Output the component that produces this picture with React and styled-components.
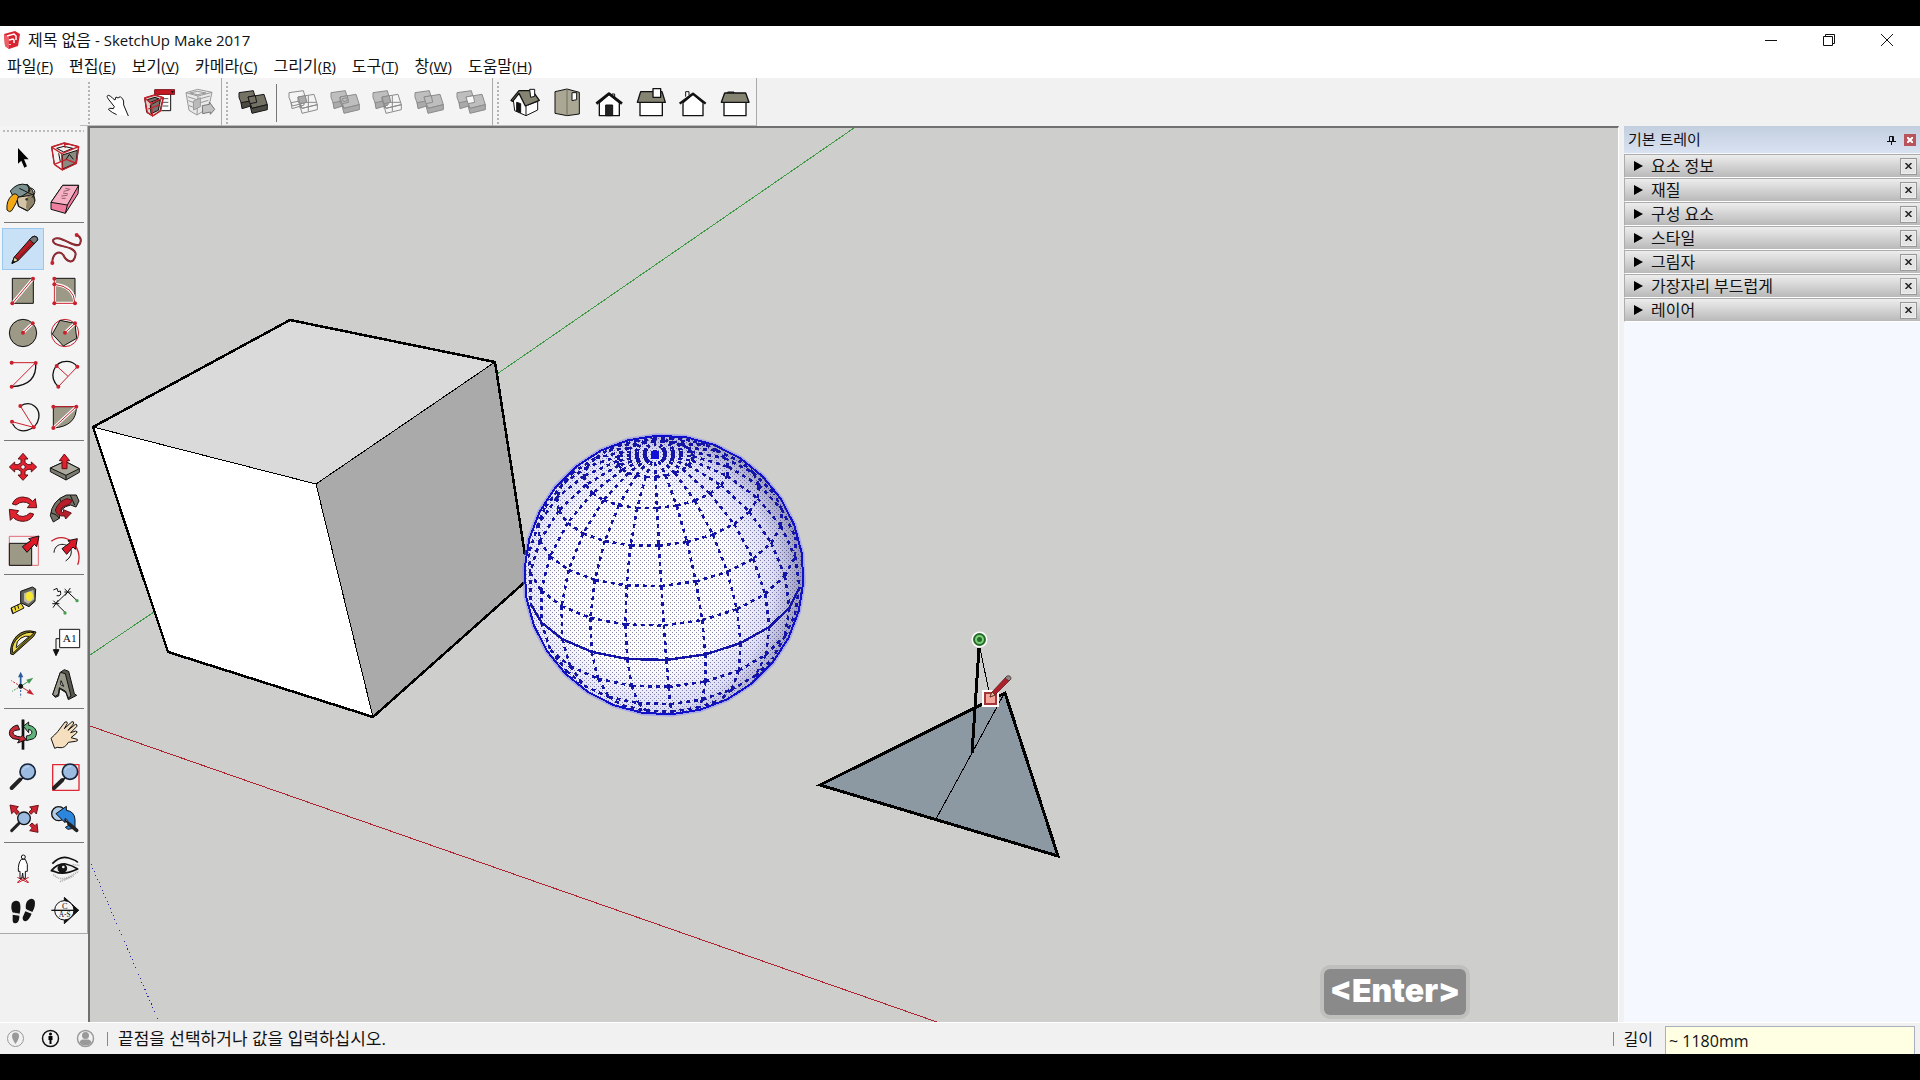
import React from 'react';
import styled, { createGlobalStyle } from 'styled-components';

const GlobalStyle = createGlobalStyle`
  * { box-sizing: border-box; }
  body { margin: 0; background: #000; }
  button, input { font: inherit; color: inherit; }
`;

const RED = '#c8202c';
const TAUPE = '#9c9a86';

const Screen = styled.div`
  display: flex;
  flex-direction: column;
  height: 100vh;
  padding: 26px 0;
  background: #000;
  color: #111;
  font-family: 'Open Sans', 'Noto Sans CJK KR', sans-serif;
  font-size: 16px;
  overflow: hidden;
`;

const Window = styled.div`
  flex: 1;
  min-height: 0;
  display: flex;
  flex-direction: column;
  background: #f1f1f1;
`;

const TitleBar = styled.header`
  display: flex;
  align-items: center;
  height: 28px;
  padding: 0 4px;
  background: #fff;
`;

const Title = styled.h1`
  flex: 1;
  margin: 0 0 0 8px;
  font-size: 15px;
  line-height: 20px;
  font-weight: 400;
`;

const Hangul = styled.span`
  font-size: 16px;
`;

const WindowButton = styled.button`
  display: flex;
  align-items: center;
  justify-content: center;
  width: 58px;
  height: 28px;
  padding: 0;
  border: 0;
  background: transparent;
`;

const MenuBar = styled.nav`
  display: flex;
  gap: 16px;
  height: 24px;
  padding: 0 7px;
  background: #fff;
`;

const MenuItem = styled.button`
  padding: 0;
  border: 0;
  background: transparent;
  font-size: 15px;
  line-height: 24px;
  white-space: nowrap;
`;

const ToolbarDock = styled.div`
  display: flex;
  height: 48px;
  padding-left: 80px;
`;

const Toolbar = styled.div`
  display: flex;
  align-items: center;
  padding: 2px 0 0 ${(p) => p.$indent || 4}px;
  border-right: 1px solid #aaa;
  border-bottom: 1px solid #bbb;
  background: #f4f4f4;
`;

const Grip = styled.span`
  width: 2px;
  height: 42px;
  margin-right: ${(p) => p.$gap}px;
  background: repeating-linear-gradient(#b4b4b4 0 2px, transparent 2px 4px);
`;

const Divider = styled.span`
  width: 1px;
  height: 38px;
  margin: 0 5px 0 2px;
  background: #777;
`;

const ToolButton = styled.button`
  display: flex;
  align-items: center;
  justify-content: center;
  width: 42px;
  height: 42px;
  padding: 0;
  border: 1px solid ${(p) => (p.$active ? '#98c8ee' : 'transparent')};
  background: ${(p) => (p.$active ? '#c9e1f6' : 'transparent')};
`;

const Workspace = styled.div`
  flex: 1;
  min-height: 0;
  display: flex;
`;

const Palette = styled.aside`
  align-self: flex-start;
  width: 88px;
  padding: 4px 0 1px 2px;
  background: #f4f4f4;
  border-right: 1px solid #aaa;
  border-bottom: 1px solid #aaa;
`;

const PaletteGrip = styled.div`
  height: 2px;
  margin: 0 3px 4px 1px;
  background: repeating-linear-gradient(90deg, #bbb 0 2px, transparent 2px 4px);
`;

const PaletteGroup = styled.div`
  display: grid;
  grid-template-columns: 42px 42px;
`;

const PaletteRule = styled.hr`
  height: 1px;
  margin: 2px 3px 5px 2px;
  border: 0;
  background: #777;
`;

const Viewport = styled.main`
  position: relative;
  flex: 1;
  min-width: 0;
  border: solid;
  border-width: 2px 1px 0 2px;
  border-color: #707070 #fff #fff #707070;
  background: #cececc;
  overflow: hidden;
`;

const Scene = styled.svg`
  display: block;
  width: 100%;
  height: 100%;
`;

const KeyBadge = styled.kbd`
  position: absolute;
  right: 152px;
  bottom: 7px;
  width: 142px;
  height: 46px;
  border-radius: 6px;
  background: #8a8a8a;
  box-shadow: 0 0 0 4px rgba(170, 170, 170, 0.4);
  color: #fff;
  font-family: Inter, sans-serif;
  font-size: 32px;
  font-weight: 900;
  line-height: 44px;
  text-align: center;
`;

const Tray = styled.aside`
  width: 301px;
  padding-left: 5px;
  display: flex;
  flex-direction: column;
`;

const TrayHeader = styled.div`
  display: flex;
  align-items: center;
  height: 27px;
  padding: 0 4px 0 4px;
  background: linear-gradient(#c3cedf, #d8e2f1);
`;

const TrayTitle = styled.h2`
  flex: 1;
  margin: 0;
  padding-bottom: 2px;
  font-size: 15px;
  line-height: 24px;
  font-weight: 400;
`;

const PinButton = styled.button`
  display: flex;
  padding: 0;
  margin-right: 8px;
  border: 0;
  background: transparent;
`;

const TrayClose = styled.button`
  display: flex;
  align-items: center;
  justify-content: center;
  width: 12px;
  height: 12px;
  padding: 0;
  border: 0;
  background: #b9545c;
`;

const TrayBody = styled.div`
  flex: 1;
  padding-top: 1px;
  background: #f5f8ff;
`;

const Section = styled.section`
  display: flex;
  align-items: center;
  height: 24px;
  padding-right: 3px;
  border: solid #acacac;
  border-width: 1px 0 0 1px;
  border-bottom: 1px solid #fff;
  background: linear-gradient(#ededed, #b9b9b9);
`;

const SectionToggle = styled.button`
  flex: 1;
  display: flex;
  align-items: center;
  gap: 8px;
  padding: 0 0 0 9px;
  border: 0;
  background: transparent;
  font-size: 16px;
  line-height: 22px;
  text-align: left;
`;

const SectionClose = styled.button`
  display: flex;
  align-items: center;
  justify-content: center;
  width: 17px;
  height: 17px;
  padding: 0;
  border: 1px solid #999;
  outline: 1px solid #eee;
  outline-offset: -2px;
  background: #e4e4e4;
`;

const StatusBar = styled.footer`
  display: flex;
  align-items: center;
  height: 32px;
  padding: 0 5px 0 6px;
  border-top: 1px solid #fff;
`;

const StatusIcons = styled.div`
  display: flex;
  gap: 16px;
  margin-right: 12px;
`;

const StatusIcon = styled.button`
  display: flex;
  width: 19px;
  height: 19px;
  padding: 0;
  border: 0;
  background: transparent;
`;

const StatusRule = styled.span`
  width: 1px;
  height: 14px;
  margin-right: 10px;
  background: #888;
`;

const Hint = styled.p`
  flex: 1;
  margin: 0;
  font-size: 17px;
  line-height: 24px;
`;

const MeasureLabel = styled.label`
  margin-right: 12px;
  line-height: 24px;
`;

const MeasureInput = styled.input`
  align-self: flex-end;
  width: 250px;
  height: 28px;
  padding: 0 3px;
  border: 1px solid #a9b0bd;
  border-bottom: 0;
  background: #ffffe4;
  font-size: 16px;
`;

/* Tool icons are drawn at three units to the pixel around their own centre on a shared sheet. */
function Icon({ x, y, children }) {
  return (
    <svg width="34" height="34" viewBox={`${x - 51} ${y - 51} 102 102`} fill="none" stroke="#111" strokeWidth="3" strokeLinejoin="round" aria-hidden="true">
      {children}
    </svg>
  );
}

const dots = (...pts) => pts.map(([cx, cy], i) => <circle key={i} cx={cx} cy={cy} r="6" fill={RED} stroke="none" />);

const sheet = {
  select: [69, 111, <path d="M54 84V131L64 122L73 143L81 139L72 118H86Z" fill="#000" stroke="none" />],
  component: [195, 111, <>
    <path d="M155 81L193 69L236 80L229 130L187 150L163 133Z" fill="#f4f0ee" />
    <path d="M187 105L232 91L228 129L188 147Z" fill="#8b8a80" />
    <path d="M170 85L192 79L218 85L191 96ZM176 100L181 125M197 120L208 103L220 118" />
    <path d="M155 81L193 69L236 80L185 101ZM163 133L187 150L229 130L236 80M155 81L163 133M185 101L187 150M193 69L196 84M163 133L199 118L229 130" stroke={RED} strokeWidth="4" />
  </>],
  paint: [69, 237, <>
    <path d="M46 207L82 193L98 212L105 240Q104 258 82 273L55 259Z" fill="#857c65" />
    <path d="M31 213Q53 185 82 195L90 213Q67 232 42 235Z" fill="#7b9290" />
    <path d="M50 232L99 225L103 248L83 272L56 259Z" fill="#d2c4a4" />
    <path d="M82 229L99 225L103 248L83 272L78 262Z" fill="#8f8468" stroke="none" />
    <path d="M58 205L99 225M85 214Q87 199 99 207T96 233" />
    <circle cx="80" cy="238" r="4" fill="#333" stroke="none" />
    <path d="M21 270Q18 242 36 226Q47 216 55 229Q52 246 35 272Q29 279 21 270Z" fill="#f3a914" />
  </>],
  eraser: [195, 237, <>
    <path d="M188 196L236 196L234 221L196 280L153 268L153 247Z" fill="#ee7f9f" />
    <path d="M188 196L236 196L202 255L153 247Z" fill="#f8b0c4" /><path d="M202 255L196 280" />
    <path d="M196 205L211 208M191 214L207 210M189 219L204 222M184 228L202 226M185 235L197 235" stroke="#5c3540" strokeWidth="2" />
  </>],
  pencil: [69, 387, <>
    <path d="M36 430L43 411L95 352Q105 345 111 352Q116 359 109 365L55 421Z" fill="#b51f28" />
    <path d="M53 417L102 364" stroke="#7d1018" strokeWidth="3" />
    <path d="M95 352Q105 345 111 352Q116 359 109 365L102 371L89 359Z" fill="#777" />
    <path d="M36 430L43 411L55 421Z" fill="#e0cf9c" /><path d="M36 430L39 422L44 426Z" fill="#111" />
  </>],
  freehand: [195, 387, <>
    <path d="M230 345Q248 354 240 371C228 392 178 339 160 359C151 383 224 373 227 402C222 440 197 421 190 405C178 390 157 400 157 428" stroke="#761821" strokeWidth="6" />
    <path d="M230 345Q248 354 240 371C228 392 178 339 160 359C151 383 224 373 227 402C222 440 197 421 190 405C178 390 157 400 157 428" stroke="#b8424c" strokeWidth="2" />{dots([230, 345], [157, 429])}
  </>],
  rectangle: [69, 513, <>
    <path d="M37 475H100V550H37Z" fill={TAUPE} /><path d="M37 550L99 476" stroke="#fff" strokeWidth="9" />
    <path d="M37 550L99 476" stroke={RED} />{dots([37, 550], [99, 476])}
  </>],
  rotatedRect: [195, 513, <>
    <path d="M163 475H225V550H163Z" fill={TAUPE} /><path d="M163 476V550H225Q222 499 163 493" stroke="#fff" strokeWidth="9" />
    <path d="M163 476V550H225Q222 499 163 493" stroke={RED} />{dots([163, 476], [163, 493], [163, 550], [225, 550])}
  </>],
  circle: [69, 639, <>
    <circle cx="69" cy="639" r="41" fill={TAUPE} /><path d="M69 638L98 610" stroke="#fff" strokeWidth="9" />
    <path d="M69 638L98 610" stroke={RED} />{dots([69, 638], [98, 610])}
  </>],
  polygon: [195, 639, <>
    <circle cx="195" cy="639" r="41" stroke={RED} /><path d="M157 642L180 601L225 610L230 655L190 678Z" fill={TAUPE} />
    <path d="M195 638L225 610" stroke="#fff" strokeWidth="9" /><path d="M195 638L225 610" stroke={RED} />{dots([195, 638], [225, 610])}
  </>],
  arc: [69, 765, <><path d="M107 729Q112 795 36 800" strokeWidth="4" /><path d="M35 728H107L35 800" stroke={RED} />{dots([35, 728], [107, 729], [35, 800])}</>],
  arc2: [195, 765, <><path d="M175 800C144 771 161 724 200 724Q220 724 232 740" strokeWidth="4" /><path d="M170 738L204 769M175 800L232 740" stroke={RED} />{dots([170, 738], [175, 800], [232, 740])}</>],
  arc3: [69, 891, <><path d="M61 858C97 838 121 867 116 895C109 934 56 947 38 912" strokeWidth="4" /><path d="M61 858L101 922L36 905" stroke={RED} />{dots([61, 858], [101, 922], [36, 905])}</>],
  pie: [195, 891, <>
    <path d="M160 860H229Q230 919 160 924Z" fill={TAUPE} /><path d="M229 860L160 924" stroke="#fff" strokeWidth="9" />
    <path d="M160 860H229L160 924" stroke={RED} />{dots([160, 860], [229, 860], [160, 924])}
  </>],
  move: [69, 111, <path d="M69 70L84 87H75V98L84 104H94V96L110 111L94 126V118H84L75 124V135H84L69 151L54 135H63V124L54 118H44V126L28 111L44 96V104H54L63 98V87H54ZM69 103L61 111L69 119L77 111Z" fill="#e3202d" fillRule="evenodd" stroke="#5c1017" />],
  pushpull: [195, 111, <>
    <path d="M151 114L195 94L238 116V127L198 150L151 125Z" fill="#7d7c70" /><path d="M151 114L195 94L238 116L198 136Z" fill="#aaa99b" /><path d="M198 136V150" />
    <path d="M193 72L209 92H201V116H186V92H178Z" fill="#e3202d" stroke="#5c1017" />
  </>],
  rotate: [69, 237, <g fill="#df2430" stroke="#5c1017">
    <path d="M37 222Q45 201 69 201Q89 202 98 214L106 206L110 233L82 233L90 223Q69 208 48 225Z" />
    <path d="M101 252Q94 273 69 274Q48 273 40 262L31 271L28 238L56 242L49 251Q68 269 90 249Z" />
  </g>],
  followme: [195, 237, <>
    <path d="M151 257Q156 211 199 195H229L237 213L228 231L212 225Q178 231 178 265L160 276Z" fill="#747367" />
    <path d="M153 248L169 255L178 265M179 207L190 226M211 196L224 225" />
    <path d="M166 240Q176 213 201 206L218 211L207 224Q185 229 183 239Q182 249 191 248L190 239L214 249L197 267L194 258Q170 260 166 240Z" fill="#b71e2a" stroke="#5c1017" />
  </>],
  scale: [69, 363, <>
    <path d="M28 319H115V406H28Z" stroke="#e26c75" /><path d="M28 340H95V406H28Z" fill={TAUPE} />
    <path d="M67 350L93 331L86 326L117 318L110 350L103 343L81 367Z" fill="#dd1726" />
  </>],
  offset: [195, 363, <>
    <path d="M154 334C196 299 253 353 233 404" stroke={RED} strokeWidth="4" /><path d="M162 368C164 338 196 337 212 355Q220 377 197 393" />
    <path d="M186 356L210 338L204 332L232 326L226 358L219 351L200 373Z" fill="#dd1726" />
  </>],
  tape: [69, 513, <>
    <path d="M33 534L63 520L72 534L38 551Z" fill="#f4dd37" />
    <path d="M62 484L97 471L107 477L105 514L87 530L62 518Z" fill="#626259" />
    <path d="M72 490L100 480L103 508L85 521L72 514Z" fill="#bdbcb1" stroke="none" />
    <ellipse cx="88" cy="499" rx="11" ry="14" fill="#f6e831" stroke="none" />
    <path d="M34 534L39 551M44 529L47 541M53 524L56 536" />
  </>],
  dimension: [195, 513, <>
    <path d="M167 521L203 486M160 512L195 547M194 477L229 510M159 533L175 510M195 497L211 474M157 521H178M193 486H214" />
    <path d="M160 480L171 475L174 485L181 483Q186 500 170 497" /><circle cx="231" cy="512" r="5" fill="#47a04f" stroke="none" /><circle cx="195" cy="549" r="5" fill="#47a04f" stroke="none" />
  </>],
  protractor: [69, 639, <>
    <path d="M32 672Q29 641 50 618Q74 595 108 606L101 619L40 674Z" fill="#7d6e15" /><path d="M37 663Q34 641 57 620Q80 603 102 608L40 669Z" fill="#edda4d" />
    <path d="M49 650Q48 634 63 624Q76 616 88 619L49 653Z" fill="#f4f4f4" />
  </>],
  text: [195, 639, <>
    <path d="M179 598H239V653H179Z" fill="#fff" /><path d="M179 626H168V660" /><path d="M160 659H177L168 677Z" fill="#111" />
    <text x="209" y="635" textAnchor="middle" fill="#111" stroke="none" fontFamily="Liberation Serif, serif" fontSize="34">A1</text>
  </>],
  axes: [69, 765, <>
    <path d="M62 769V735" stroke="#2b5b9c" strokeWidth="5" /><path d="M62 725L70 742H54Z" fill="#2b5b9c" stroke="none" />
    <path d="M62 769L84 755" stroke="#449554" /><path d="M100 743L87 761L79 749Z" fill="#449554" stroke="none" />
    <path d="M62 769L84 783" stroke={RED} /><path d="M102 795L80 789L89 777Z" fill={RED} stroke="none" />
    <path d="M62 769V803" stroke="#2b5b9c" strokeDasharray="6 5" /><path d="M62 769L34 752" stroke={RED} strokeDasharray="6 4" /><path d="M62 769L36 784" stroke="#449554" strokeDasharray="5 4" />
    <circle cx="62" cy="769" r="6" fill="#111" />
  </>],
  text3d: [195, 765, <>
    <path d="M158 794L181 727L193 719L206 724L223 791L230 796L205 809L198 788L179 776L176 798L166 802Z" fill="#58584f" />
    <path d="M158 794L181 727L196 731L213 798L205 804L197 784L178 773L175 793L166 799Z" fill="#9a998b" />
    <path d="M183 752L191 769L182 764Z" fill="#f4f4f4" />
  </>],
  orbit: [69, 105, <>
    <path d="M69 59V149" strokeWidth="8" /><path d="M53 75C25 81 21 106 39 116L58 119L53 129L79 119L67 106L62 111Q38 108 39 97Q40 90 59 89Z" fill="#c82b38" />
    <path d="M70 79L86 66V76C111 79 116 105 101 116L79 122V108Q95 106 96 96Q94 89 86 88V98Z" fill="#60b47b" /><path d="M69 59V83" strokeWidth="7" />
  </>],
  pan: [195, 105, <path d="M164 145L153 115Q164 105 173 95L195 66Q202 63 202 70L193 86L216 65Q224 64 220 72L204 91L226 73Q234 73 230 80L212 98L227 93Q234 94 230 99L213 113L232 118Q235 123 227 124L205 127Q195 145 180 143Q171 140 164 145Z" fill="#f6dfbf" />],
  zoom: [69, 231, <><path d="M60 239L35 264" strokeWidth="12" stroke="#222" strokeLinecap="round" /><path d="M72 230L62 240" strokeWidth="5" /><circle cx="83" cy="215" r="23" fill="#9bbbe0" stroke="#172338" strokeWidth="5" /><path d="M68 211Q73 199 87 200" stroke="#c9ddf0" /></>],
  zoomWindow: [195, 231, <><path d="M158 194H237V271H158Z" stroke="#df2834" strokeWidth="4" /><path d="M187 240L162 264" strokeWidth="12" stroke="#222" strokeLinecap="round" /><path d="M199 230L189 240" strokeWidth="5" /><circle cx="210" cy="215" r="23" fill="#9bbbe0" stroke="#172338" strokeWidth="5" /><path d="M195 211Q200 199 214 200" stroke="#c9ddf0" /></>],
  zoomExtents: [69, 357, <>
    <g fill="#cc2532" stroke="#6e1219"><path d="M30 315L55 320L49 327L58 337L50 344L42 334L35 341Z" /><path d="M115 316L109 342L102 334L93 343L87 336L96 327L89 321Z" /><path d="M114 397L89 392L97 384L89 376L96 369L105 377L111 371Z" /></g>
    <path d="M56 371L35 392" strokeWidth="9" stroke="#222" strokeLinecap="round" /><circle cx="72" cy="355" r="19" fill="#9bbbe0" strokeWidth="4" />
  </>],
  previous: [195, 357, <>
    <circle cx="176" cy="341" r="21" fill="#b4cde7" strokeWidth="4" /><path d="M193 359L207 371" strokeWidth="5" />
    <path d="M168 341L199 319V331Q223 334 225 358V384L204 388L196 382L205 377Q207 358 195 356V368Z" fill="#2d86dd" />
    <path d="M207 372L230 391" strokeWidth="11" stroke="#222" strokeLinecap="round" />
  </>],
  camera: [69, 507, <>
    <path d="M51 548L69 532L87 548M52 532L84 548M86 532L54 548" stroke={RED} /><circle cx="70" cy="471" r="6" fill="#fff" />
    <path d="M64 478H76Q85 490 82 514H76V535H70L68 519L65 535H60V514H55Q54 488 64 478Z" fill="#fff" />
  </>],
  look: [195, 507, <>
    <path d="M157 491Q180 466 206 474T233 488" strokeWidth="5" /><path d="M154 512Q173 490 197 492Q216 496 233 507Q191 527 165 515Z" fill="#eee" strokeWidth="5" />
    <circle cx="187" cy="505" r="13" fill="#161616" /><circle cx="190" cy="501" r="4" fill="#eee" stroke="none" />
    <path d="M160 524Q180 543 205 532L236 514M180 545L221 528M218 494L238 496" stroke="#aaa" strokeWidth="5" strokeDasharray="3 3" />
  </>],
  walk: [69, 633, <g fill="#151515" stroke="none"><path d="M36 609Q46 597 58 606Q64 616 59 641L38 638Q31 622 36 609ZM38 644L58 647Q59 663 50 669Q38 673 38 661Z" /><path d="M82 603Q96 590 104 602Q108 617 97 636L78 628Q75 613 82 603ZM76 634L95 641Q87 660 77 664Q67 664 68 652Z" /><path d="M37 638L60 644M77 629L96 639" stroke="#ddd" strokeWidth="4" strokeDasharray="3 2" /></g>],
  section: [195, 633, <>
    <path d="M193 592L236 631L193 671Z" fill="#111" /><circle cx="193" cy="631" r="29" fill="#f6f6f6" /><path d="M154 631H236" strokeWidth="4" />
    <text x="194" y="626" textAnchor="middle" fill="#111" stroke="none" fontFamily="Liberation Serif, serif" fontSize="25">C</text>
    <text x="194" y="652" textAnchor="middle" fill="#111" stroke="none" fontFamily="Liberation Serif, serif" fontSize="22">A-S</text>
  </>],
  hand: [108, 129, <path d="M110 164Q96 158 86 149Q84 143 100 146L103 140L85 117Q78 107 85 106Q91 106 98 115L105 120L108 111L114 114L121 110L128 117Q132 120 131 135L145 168" fill="#fff" />],
  options: [234, 129, <>
    <path d="M237 102H272V152H244" fill="#fff" /><path d="M248 116H265M248 127H265M248 138H265" stroke="#555" />
    <path d="M224 89H284V103H224Z" fill="#c91825" stroke="#77131a" /><path d="M272 93H282L277 100Z" fill="#111" stroke="none" />
    <path d="M194 114L224 105L250 113L240 153L218 168L200 157Z" fill="#ddd2cc" /><path d="M211 135L241 119L235 151L213 161ZM202 119L225 112L237 117L209 128Z" fill="#77736c" />
    <path d="M194 114L224 105L250 113L213 130ZM194 114L202 157L218 168L242 153L250 113M213 130L218 168M205 147L240 134" stroke={RED} strokeWidth="4" />
  </>],
  attributes: [360, 129, <g stroke="#999">
    <path d="M318 98L353 88L396 97L386 143L351 165L327 151Z" fill="#e9e9e9" /><path d="M318 98L354 108L396 97M354 108L351 165M330 99L352 94L378 99L352 104ZM323 110L350 119L390 108M325 122L351 131L385 121M327 137L350 145" />
    <path d="M340 124L361 113V140L341 150Z" fill="#bbb" /><path d="M367 137L388 133V126L404 148L391 163V156L368 161Z" fill="#c2c2c2" stroke="#777" />
  </g>],
};

function HouseIcon({ view }) {
  const art = {
    iso: [255, 99, <>
      <path d="M220 90L238 70L264 105L293 94V120L258 137L224 122Z" fill="#fff" /><path d="M258 106V136" />
      <path d="M213 91L237 62L277 62L298 91L256 108L237 70L218 94Z" fill="#858371" strokeWidth="4" /><path d="M230 97L242 101V128L230 123Z" fill="#111" />
      <path d="M269 58H284V79L272 82Z" fill="#fff" />
    </>],
    top: [381, 99, <><path d="M345 65L381 57L418 67V132L381 137L345 130Z" fill="#aaa894" /><path d="M381 57V137" stroke="#6f6d5f" /><path d="M396 68H410V89L396 92Z" fill="#fff" /></>],
    front: [507, 99, <><path d="M516 76V72H524V84" fill="#fff" /><path d="M478 98V137H538V98L507 73Z" fill="#fff" strokeWidth="4" /><path d="M469 101L507 71L546 101" strokeWidth="8" /><path d="M497 137V105H518V137Z" fill="#222" /></>],
    right: [633, 99, <><path d="M600 97H667V137H600Z" fill="#fff" strokeWidth="4" /><path d="M602 65H666L676 97H592Z" fill="#858371" strokeWidth="4" /><path d="M639 56H662V82H639Z" fill="#fff" strokeWidth="4" /></>],
    back: [759, 99, <><path d="M737 80V65H747V76" fill="#fff" /><path d="M729 98V137H789V98L759 73Z" fill="#fff" strokeWidth="4" /><path d="M719 101L759 71L797 101" strokeWidth="7" /></>],
    left: [885, 99, <><path d="M863 66H882V72H863Z" fill="#888" /><path d="M852 97H918V137H852Z" fill="#fff" strokeWidth="4" /><path d="M854 69H917L927 97H844Z" fill="#858371" strokeWidth="4" /></>],
  }[view];
  return <Icon x={art[0]} y={art[1]}>{art[2]}</Icon>;
}

function SolidIcon({ kind }) {
  const active = kind === 'outer';
  const line = active ? '#161616' : '#8b8b8b';
  const face = active ? '#747264' : '#bebebe';
  const side = active ? '#4c4b43' : '#aaa';
  const back = kind === 'intersect' ? 'none' : face;
  const front = kind === 'intersect' || kind === 'subtract' ? 'none' : face;
  const overlap = { intersect: '#aaa', subtract: '#aaa', split: '#f8f8f8' }[kind] || face;
  return (
    <Icon x={519} y={129}>
      <g stroke={line}>
        <path d="M477 98L520 92L530 127L487 138L477 112Z" fill={back} />
        <path d="M483 128L522 121V135L486 146Z" fill={back === 'none' ? 'none' : side} />
        <path d="M504 111L552 103L562 134L516 145Z" fill={front} />
        <path d="M510 137L516 145L562 134V149L516 160Z" fill={front === 'none' ? 'none' : side} />
        <path d="M504 111L526 107L530 127L510 131Z" fill={overlap} />
        {(kind === 'intersect' || kind === 'subtract') && <path d="M504 111V124L516 145M535 107V153M530 127H560M510 131V145" />}
        {kind === 'union' && <path d="M511 116L524 113L526 122L514 125ZM504 111V126L516 145" />}
      </g>
    </Icon>
  );
}

function SheetIcon({ name }) {
  const [x, y, art] = sheet[name];
  return <Icon x={x} y={y}>{art}</Icon>;
}

/* Sphere geometry: 24 meridians by 12 bands, seen in slight perspective. */
const SPHERE = { cx: 664, cy: 575, r: 137, depth: 7.9, tilt: 34, roll: 4.3, phase: -1.5 };
const rad = (d) => (d * Math.PI) / 180;

function project(lat, lon) {
  const a = rad(lat);
  const o = rad(lon + SPHERE.phase);
  const t = rad(SPHERE.tilt);
  const w = rad(SPHERE.roll);
  const x = Math.cos(a) * Math.sin(o);
  const f = Math.cos(a) * Math.cos(o);
  const up = Math.sin(a) * Math.cos(t) - f * Math.sin(t);
  const near = Math.sin(a) * Math.sin(t) + f * Math.cos(t);
  const k = (SPHERE.r * Math.sqrt(SPHERE.depth ** 2 - 1)) / (SPHERE.depth - near);
  const px = x * k;
  const py = -up * k;
  return {
    x: SPHERE.cx + px * Math.cos(w) + py * Math.sin(w),
    y: SPHERE.cy - px * Math.sin(w) + py * Math.cos(w),
    seen: near > 0.05,
  };
}

function segments() {
  const dashed = [];
  const solid = [];
  const seg = (list, p, q) => {
    if (p.seen && q.seen) list.push(`M${p.x.toFixed(1)} ${p.y.toFixed(1)}L${q.x.toFixed(1)} ${q.y.toFixed(1)}`);
  };
  for (let lon = 0; lon < 360; lon += 15) {
    for (let lat = -75; lat < 90; lat += 15) {
      seg(dashed, project(lat + 15, lon), project(lat, lon));
      seg(lat === 0 ? solid : dashed, project(lat, lon), project(lat, lon + 15));
    }
  }
  return { dashed: dashed.join(''), solid: solid.join('') };
}

const wire = segments();
const outline = Array.from({ length: 30 }, (_, i) => {
  const a = rad(i * 12 + 3);
  return `${(SPHERE.cx + 139.5 * Math.cos(a)).toFixed(1)},${(SPHERE.cy + 139.5 * Math.sin(a)).toFixed(1)}`;
}).join(' ');

function Model() {
  return (
    <Scene viewBox="90 128 1528 894" preserveAspectRatio="xMinYMin slice" role="img" aria-label="3D 모델">
      <defs>
        <radialGradient id="shade" cx="0.43" cy="0.52" r="0.58">
          <stop offset="0" stopColor="#fff" />
          <stop offset="0.55" stopColor="#fcfcff" />
          <stop offset="0.8" stopColor="#dedef8" />
          <stop offset="1" stopColor="#9090b8" />
        </radialGradient>
        <pattern id="stipple" width="4" height="4" patternUnits="userSpaceOnUse">
          <path d="M0 0H1V1H0ZM2 2H3V3H2Z" fill="#23235c" fillOpacity="0.55" />
        </pattern>
      </defs>
      <g fill="none" shapeRendering="crispEdges">
        <path d="M90 655L154 612M497 374L854 128" stroke="#3f9b43" />
        <path d="M90 726L937 1022" stroke="#b02230" />
        <path d="M91 864L159 1022" stroke="#2424b0" strokeDasharray="1 3" strokeWidth="1" />
      </g>
      <g stroke="#000" strokeLinejoin="round" shapeRendering="crispEdges">
        <path d="M93 427L290 320L495 362L316 484Z" fill="#dadada" stroke="none" />
        <path d="M93 427L316 484L373 717L168 652Z" fill="#fff" stroke="none" />
        <path d="M316 484L495 362L526 570V581L373 717Z" fill="#aaa" stroke="none" />
        <path d="M93 427L316 484L495 362M316 484L373 717" fill="none" />
        <path d="M525 555L495 362L290 320L93 427L168 652L373 717L526 581" fill="none" strokeWidth="2.5" />
      </g>
      <polygon points={outline} fill="none" stroke="#8080ff" strokeOpacity="0.5" strokeWidth="5" />
      <polygon points={outline} fill="url(#shade)" />
      <polygon points={outline} fill="url(#stipple)" shapeRendering="crispEdges" />
      <g fill="none" stroke="#1414a8" strokeWidth="2" shapeRendering="crispEdges">
        <path d={wire.dashed} strokeWidth="2.6" strokeDasharray="4 4" />
        <path d={wire.solid} strokeWidth="2.4" />
        <polygon points={outline} stroke="#1010c8" />
      </g>
      <path d="M651 451H659V459H651Z" fill="#1010d8" />
      <g stroke="#000" fill="none" shapeRendering="crispEdges">
        <path d="M820 785L1005 693L1058 856Z" fill="#8d99a2" strokeWidth="3" />
        <path d="M1004 694L972 753L936 819M980 648L989 692" />
        <path d="M979 648L972 753" strokeWidth="3" />
      </g>
      <circle cx="979.500" cy="639.500" r="8" fill="#fff" />
      <circle cx="979.500" cy="639.500" r="5.500" fill="#7bd27a" stroke="#276b2b" strokeWidth="2" />
      <circle cx="979.500" cy="639.500" r="2.500" fill="#276b2b" />
      <path d="M982 690H999V707H982Z" fill="#fff" />
      <path d="M985 693H996V704H985Z" fill="#f4a79a" stroke="#a2363a" strokeWidth="2" />
      <g stroke="#5a2424" strokeWidth="0.8">
        <path d="M990 697L992 692L1006 677L1010 680L995 695Z" fill="#b0202a" />
        <path d="M1005 678L1007 676Q1011 675 1011 679L1009 681Z" fill="#888" />
        <path d="M990 697L992 692L995 695Z" fill="#e0c79a" />
      </g>
    </Scene>
  );
}

const menus = [['파일', 'F'], ['편집', 'E'], ['보기', 'V'], ['카메라', 'C'], ['그리기', 'R'], ['도구', 'T'], ['창', 'W'], ['도움말', 'H']];
const solids = [['intersect', '교차'], ['union', '결합'], ['subtract', '빼기'], ['trim', '자르기'], ['split', '분할']];
const views = [['iso', '등각투영'], ['top', '평면도'], ['front', '정면도'], ['right', '우측면도'], ['back', '배면도'], ['left', '좌측면도']];
const sections = ['요소 정보', '재질', '구성 요소', '스타일', '그림자', '가장자리 부드럽게', '레이어'];
const palette = [
  [['select', '선택'], ['component', '구성 요소 만들기'], ['paint', '페인트 통'], ['eraser', '지우개']],
  [['pencil', '선'], ['freehand', '자유곡선'], ['rectangle', '직사각형'], ['rotatedRect', '회전된 직사각형'], ['circle', '원'], ['polygon', '다각형'], ['arc', '호'], ['arc2', '2점 호'], ['arc3', '3점 호'], ['pie', '파이']],
  [['move', '이동'], ['pushpull', '밀기/끌기'], ['rotate', '회전'], ['followme', '따라가기'], ['scale', '배율'], ['offset', '오프셋']],
  [['tape', '줄자'], ['dimension', '치수'], ['protractor', '각도기'], ['text', '텍스트'], ['axes', '축'], ['text3d', '3D 텍스트']],
  [['orbit', '궤도'], ['pan', '이동 보기'], ['zoom', '확대/축소'], ['zoomWindow', '창 확대'], ['zoomExtents', '범위 확대'], ['previous', '이전']],
  [['camera', '카메라 배치'], ['look', '둘러보기'], ['walk', '이동 시점'], ['section', '단면 평면']],
];

function Tool({ name, label }) {
  return (
    <ToolButton type="button" aria-label={label} $active={name === 'pencil'}>
      <SheetIcon name={name} />
    </ToolButton>
  );
}

export default function App() {
  return (
    <Screen>
      <GlobalStyle />
      <Window>
        <TitleBar>
          <svg width="16" height="20" viewBox="0 0 16 20" aria-hidden="true">
            <path d="M0 4L11 1L16 4L14 16L5 19L1 16Z" fill="#d9232e" />
            <path d="M0 4L5 7L5 19L1 16Z" fill="#ee5c65" />
            <path d="M3 6L10 4L12 6V10M5 10L9 9L10 10V13M6 14V15" fill="none" stroke="#fff" strokeWidth="1.500" />
          </svg>
          <Title><Hangul>제목 없음</Hangul> - SketchUp Make 2017</Title>
          <WindowButton type="button" aria-label="최소화"><svg width="12" height="12"><path d="M0 6.500H12" stroke="#111" /></svg></WindowButton>
          <WindowButton type="button" aria-label="이전 크기로"><svg width="12" height="12" fill="none" stroke="#111"><path d="M0.500 2.500H9.500V11.500H0.500ZM2.500 2.500V0.500H11.500V9.500H9.500" /></svg></WindowButton>
          <WindowButton type="button" aria-label="닫기"><svg width="12" height="12"><path d="M0 0L12 12M12 0L0 12" stroke="#111" /></svg></WindowButton>
        </TitleBar>
        <MenuBar>
          {menus.map(([name, key]) => <MenuItem key={key} type="button"><Hangul>{name}</Hangul>(<u>{key}</u>)</MenuItem>)}
        </MenuBar>
        <ToolbarDock>
          <Toolbar $indent={8}>
            <Grip $gap={5} />
            <Tool name="hand" label="상호 작용" /><Tool name="options" label="구성 요소 옵션" /><Tool name="attributes" label="구성 요소 속성" />
          </Toolbar>
          <Toolbar>
            <Grip $gap={4} />
            <ToolButton type="button" aria-label="외부 쉘"><SolidIcon kind="outer" /></ToolButton>
            <Divider />
            {solids.map(([kind, label]) => (
              <ToolButton key={kind} type="button" aria-label={label}><SolidIcon kind={kind} /></ToolButton>
            ))}
          </Toolbar>
          <Toolbar>
            <Grip $gap={5} />
            {views.map(([view, label]) => (
              <ToolButton key={view} type="button" aria-label={label}><HouseIcon view={view} /></ToolButton>
            ))}
          </Toolbar>
        </ToolbarDock>
        <Workspace>
          <Palette>
            <PaletteGrip />
            {palette.map((group, i) => (
              <React.Fragment key={i}>
                {i > 0 && <PaletteRule />}
                <PaletteGroup>{group.map(([name, label]) => <Tool key={name} name={name} label={label} />)}</PaletteGroup>
              </React.Fragment>
            ))}
          </Palette>
          <Viewport>
            <Model />
            <KeyBadge>&lt;Enter&gt;</KeyBadge>
          </Viewport>
          <Tray>
            <TrayHeader>
              <TrayTitle>기본 트레이</TrayTitle>
              <PinButton type="button" aria-label="고정"><svg width="9" height="10" fill="none" stroke="#111"><path d="M2.500 6V1.500H6.500V6M5.500 1V6M0 6.500H9M4.500 7V10" /></svg></PinButton>
              <TrayClose type="button" aria-label="트레이 닫기"><svg width="6" height="6"><path d="M0 0L6 6M6 0L0 6" stroke="#fff" strokeWidth="2" /></svg></TrayClose>
            </TrayHeader>
            <TrayBody>
              {sections.map((name) => (
                <Section key={name}>
                  <SectionToggle type="button">
                    <svg width="9" height="10" aria-hidden="true"><path d="M0 0L9 5L0 10Z" fill="#000" /></svg>
                    {name}
                  </SectionToggle>
                  <SectionClose type="button" aria-label={`${name} 닫기`}><svg width="7" height="6"><path d="M0.500 0L6.500 6M6.500 0L0.500 6" stroke="#222" strokeWidth="1.500" /></svg></SectionClose>
                </Section>
              ))}
            </TrayBody>
          </Tray>
        </Workspace>
        <StatusBar>
          <StatusIcons>
            <StatusIcon type="button" aria-label="지리적 위치"><svg width="19" height="19"><circle cx="9.500" cy="9.500" r="8" fill="none" stroke="#999" /><path d="M9.500 15Q6 10 6 7A3.500 3.500 0 0 1 13 7Q13 10 9.500 15Z" fill="#999" /></svg></StatusIcon>
            <StatusIcon type="button" aria-label="크레딧"><svg width="19" height="19"><circle cx="9.500" cy="9.500" r="8" fill="none" stroke="#111" strokeWidth="1.500" /><circle cx="9.500" cy="5" r="1.500" /><path d="M7.500 7H11.500V11H10.500V15H8.500V11H7.500Z" /></svg></StatusIcon>
            <StatusIcon type="button" aria-label="로그인"><svg width="19" height="19"><circle cx="9.500" cy="9.500" r="8" fill="none" stroke="#999" strokeWidth="1.500" /><circle cx="9.500" cy="6.500" r="3.500" fill="#999" /><path d="M3.500 14Q4 10.500 7 10.500H12Q15 10.500 15.500 14Q9.500 19 3.500 14Z" fill="#999" /></svg></StatusIcon>
          </StatusIcons>
          <StatusRule />
          <Hint>끝점을 선택하거나 값을 입력하십시오.</Hint>
          <StatusRule />
          <MeasureLabel htmlFor="measure">길이</MeasureLabel>
          <MeasureInput id="measure" defaultValue="~ 1180mm" />
        </StatusBar>
      </Window>
    </Screen>
  );
}
